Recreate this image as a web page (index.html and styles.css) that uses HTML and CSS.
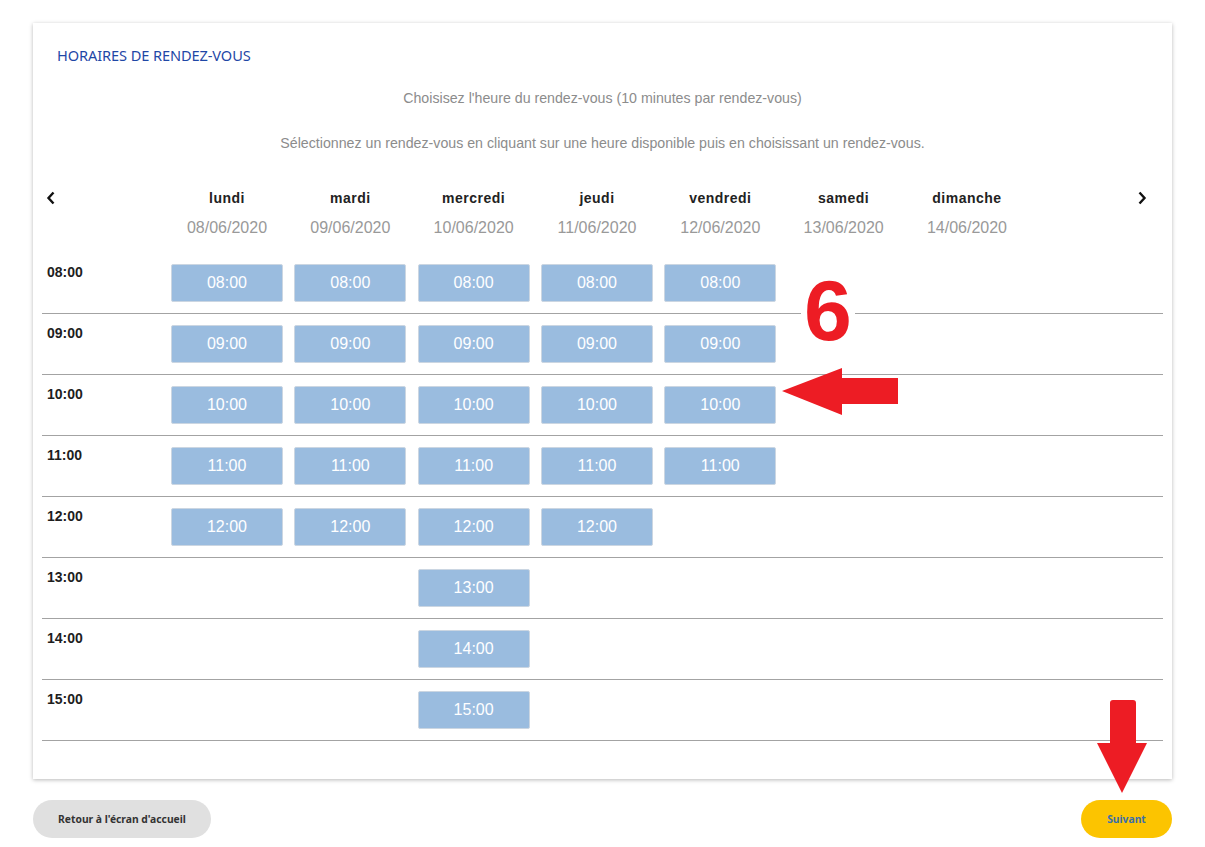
FILE: index.html
```html
<!DOCTYPE html>
<html lang="fr">
<head>
<meta charset="utf-8">
<title>Horaires de rendez-vous</title>
<link rel="stylesheet" href="styles.css">
</head>
<body>
<div class="page">
  <section class="card">
    <h2 class="title">HORAIRES DE RENDEZ-VOUS</h2>
    <p class="info first">Choisisez l'heure du rendez-vous (10 minutes par rendez-vous)</p>
    <p class="info second">Sélectionnez un rendez-vous en cliquant sur une heure disponible puis en choisissant un rendez-vous.</p>

    <div class="week-head">
      <div class="nav nav-prev">
        <svg width="10" height="14" viewBox="0 0 10 14"><path d="M7.5 1.5 L2.5 7 L7.5 12.5" fill="none" stroke="#111" stroke-width="2.4"/></svg>
      </div>
      <div class="day"><span class="dname">lundi</span><span class="ddate">08/06/2020</span></div>
      <div class="day"><span class="dname">mardi</span><span class="ddate">09/06/2020</span></div>
      <div class="day"><span class="dname">mercredi</span><span class="ddate">10/06/2020</span></div>
      <div class="day"><span class="dname">jeudi</span><span class="ddate">11/06/2020</span></div>
      <div class="day"><span class="dname">vendredi</span><span class="ddate">12/06/2020</span></div>
      <div class="day"><span class="dname">samedi</span><span class="ddate">13/06/2020</span></div>
      <div class="day"><span class="dname">dimanche</span><span class="ddate">14/06/2020</span></div>
      <div class="nav nav-next">
        <svg width="10" height="14" viewBox="0 0 10 14"><path d="M2.5 1.5 L7.5 7 L2.5 12.5" fill="none" stroke="#111" stroke-width="2.4"/></svg>
      </div>
    </div>

    <div class="slots">
      <div class="row">
        <div class="hour">08:00</div>
        <div class="cell"><button class="slot">08:00</button></div>
        <div class="cell"><button class="slot">08:00</button></div>
        <div class="cell"><button class="slot">08:00</button></div>
        <div class="cell"><button class="slot">08:00</button></div>
        <div class="cell"><button class="slot">08:00</button></div>
        <div class="cell"></div>
        <div class="cell"></div>
      </div>
      <div class="row">
        <div class="hour">09:00</div>
        <div class="cell"><button class="slot">09:00</button></div>
        <div class="cell"><button class="slot">09:00</button></div>
        <div class="cell"><button class="slot">09:00</button></div>
        <div class="cell"><button class="slot">09:00</button></div>
        <div class="cell"><button class="slot">09:00</button></div>
        <div class="cell"></div>
        <div class="cell"></div>
      </div>
      <div class="row">
        <div class="hour">10:00</div>
        <div class="cell"><button class="slot">10:00</button></div>
        <div class="cell"><button class="slot">10:00</button></div>
        <div class="cell"><button class="slot">10:00</button></div>
        <div class="cell"><button class="slot">10:00</button></div>
        <div class="cell"><button class="slot">10:00</button></div>
        <div class="cell"></div>
        <div class="cell"></div>
      </div>
      <div class="row">
        <div class="hour">11:00</div>
        <div class="cell"><button class="slot">11:00</button></div>
        <div class="cell"><button class="slot">11:00</button></div>
        <div class="cell"><button class="slot">11:00</button></div>
        <div class="cell"><button class="slot">11:00</button></div>
        <div class="cell"><button class="slot">11:00</button></div>
        <div class="cell"></div>
        <div class="cell"></div>
      </div>
      <div class="row">
        <div class="hour">12:00</div>
        <div class="cell"><button class="slot">12:00</button></div>
        <div class="cell"><button class="slot">12:00</button></div>
        <div class="cell"><button class="slot">12:00</button></div>
        <div class="cell"><button class="slot">12:00</button></div>
        <div class="cell"></div>
        <div class="cell"></div>
        <div class="cell"></div>
      </div>
      <div class="row">
        <div class="hour">13:00</div>
        <div class="cell"></div>
        <div class="cell"></div>
        <div class="cell"><button class="slot">13:00</button></div>
        <div class="cell"></div>
        <div class="cell"></div>
        <div class="cell"></div>
        <div class="cell"></div>
      </div>
      <div class="row">
        <div class="hour">14:00</div>
        <div class="cell"></div>
        <div class="cell"></div>
        <div class="cell"><button class="slot">14:00</button></div>
        <div class="cell"></div>
        <div class="cell"></div>
        <div class="cell"></div>
        <div class="cell"></div>
      </div>
      <div class="row">
        <div class="hour">15:00</div>
        <div class="cell"></div>
        <div class="cell"></div>
        <div class="cell"><button class="slot">15:00</button></div>
        <div class="cell"></div>
        <div class="cell"></div>
        <div class="cell"></div>
        <div class="cell"></div>
      </div>
    </div>
  </section>

  <div class="actions">
    <button class="btn btn-back">Retour à l'écran d'accueil</button>
    <button class="btn btn-next">Suivant</button>
  </div>

  <div class="annot-num">6</div>
  <svg class="annot-left" width="117" height="48" viewBox="0 0 117 48">
    <polygon points="0,23 60,0 60,10 116,10 116,36 60,36 60,47" fill="#ed1c24"/>
  </svg>
  <svg class="annot-down" width="52" height="95" viewBox="0 0 52 95">
    <path d="M13,4 Q13,1 16,1 L36,1 Q39,1 39,4 L39,44 L50,44 L25,94 L0,44 L13,44 Z" fill="#ed1c24"/>
  </svg>
</div>
</body>
</html>
```

FILE: styles.css
```css
* { box-sizing: border-box; }

html, body {
  margin: 0;
  padding: 0;
  background: #ffffff;
}

body {
  font-family: "Liberation Sans", Arial, sans-serif;
}

.page {
  position: relative;
  width: 1205px;
  height: 847px;
  padding: 23px 33px 0 33px;
}

.card {
  background: #fff;
  height: 756px;
  padding: 0 9px;
  box-shadow: 0 1px 4px rgba(0, 0, 0, 0.28);
  display: flex;
  flex-direction: column;
}

.title {
  margin: 22px 0 0 15px;
  font-family: "Noto Sans", "Open Sans", sans-serif;
  font-weight: 400;
  font-size: 14.6px;
  line-height: 20px;
  color: #1f47a6;
  letter-spacing: -0.1px;
}

.info {
  margin: 0;
  text-align: center;
  font-size: 14.2px;
  line-height: 20px;
  color: #8c8c8c;
}

.info.first { margin-top: 23px; }
.info.second { margin-top: 25px; }

.week-head {
  display: grid;
  grid-template-columns: repeat(8, 123.33px) 1fr;
  margin-top: 35px;
}

.nav {
  height: 20px;
  display: flex;
  align-items: center;
}

.nav-prev { padding-left: 4px; }
.nav-next { justify-content: flex-end; padding-right: 16px; }

.day {
  display: flex;
  flex-direction: column;
  align-items: center;
}

.dname {
  font-weight: 700;
  font-size: 14px;
  line-height: 20px;
  letter-spacing: 0.5px;
  color: #222;
}

.ddate {
  margin-top: 10px;
  font-size: 16px;
  line-height: 20px;
  color: #999;
}

.slots {
  margin-top: 15px;
}

.row {
  display: grid;
  grid-template-columns: repeat(8, 123.33px) 1fr;
  height: 61px;
  border-bottom: 1px solid #a3a3a3;
}

.hour {
  padding: 11px 0 0 5px;
  font-weight: 700;
  font-size: 14px;
  line-height: 16px;
  color: #1e1e1e;
}

.cell {
  display: flex;
  justify-content: center;
  padding-top: 11px;
}

.slot {
  width: 112px;
  height: 38px;
  background: #9abcdf;
  border: 1px solid #cbd6e2;
  border-radius: 2px;
  color: #fff;
  font-family: "Liberation Sans", Arial, sans-serif;
  font-size: 16px;
  padding: 0;
}

.actions {
  display: flex;
  justify-content: space-between;
  margin-top: 21px;
}

.btn {
  height: 38px;
  border: none;
  border-radius: 19px;
  font-family: "Noto Sans", "Open Sans", sans-serif;
  font-weight: 700;
  font-size: 10.3px;
  padding: 0;
}

.btn-back {
  width: 178px;
  background: #e0e0e0;
  color: #333;
}

.btn-next {
  width: 91px;
  background: #fcc400;
  color: #3a6fa8;
}

.annot-num {
  position: absolute;
  left: 801px;
  top: 266px;
  padding: 0 3px;
  background: #fff;
  font-family: "Liberation Sans", Arial, sans-serif;
  font-weight: 700;
  font-size: 86px;
  line-height: 88px;
  color: #ed1c24;
}

.annot-left {
  position: absolute;
  left: 782px;
  top: 368px;
}

.annot-down {
  position: absolute;
  left: 1097px;
  top: 699px;
}
```
